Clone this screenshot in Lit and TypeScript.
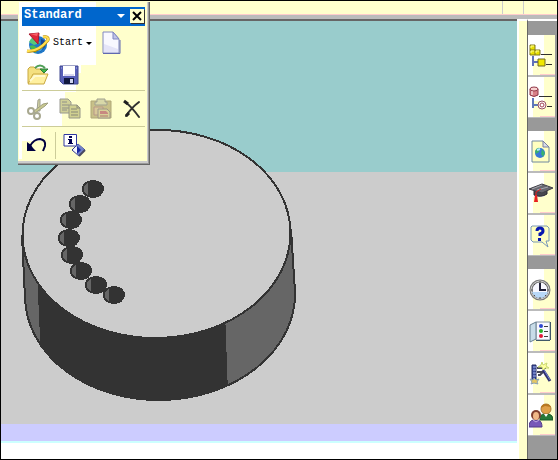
import { LitElement, html, css, svg, TemplateResult } from "lit";
import { customElement, property } from "lit/decorators.js";

const icon = (w: number, h: number, body: TemplateResult) =>
  html`<svg width=${w} height=${h} viewBox="0 0 ${w} ${h}" aria-hidden="true">${body}</svg>`;

const startIcon = icon(24, 24, svg`
  <circle cx="12" cy="14" r="9" fill="#2078c8"/>
  <path d="M3 11Q5 6 11 5L14 12 8 14Z" fill="#58c878"/>
  <path d="M4 15Q8 13 11 17L10 22Q6 20 4 16Z" fill="#48b850"/>
  <path d="M15 8Q21 9 19 16L14 21Q12 17 15 14Z" fill="#184898"/>
  <path d="M12 16Q16 14 18 15L15 20Q12 21 11 19Z" fill="#38a0e0"/>
  <path d="M1 20Q12 22 22 9Q23 5 17 6" fill="none" stroke="#b88800" stroke-width="3"/>
  <path d="M1 20Q12 21 22 9Q23 5 17 6" fill="none" stroke="#ffe050" stroke-width="2"/>
  <path d="M3 3L13 2 12 13Z" fill="#e02838" stroke="#a81830"/>
  <path d="M4 3L12 2 11 5Z" fill="#f86068"/>`);
const pageIcon = icon(20, 24, svg`
  <path d="M2 1H12L18 8V22H2Z" fill="#f8f8ff" stroke="#8088c0"/>
  <path d="M3 13L17 18V21H3Z" fill="#e4e4f8"/>
  <path d="M12 1V8H18Z" fill="#c0c4e8" stroke="#8088c0"/>
  <path d="M2 22.5H19V9" fill="none" stroke="#6068b0"/>`);
const openIcon = icon(24, 24, svg`
  <path d="M2 20V6L4 4H8L10 6H16L18 8V19Z" fill="#f4e080" stroke="#c8a840"/>
  <path d="M2 21L7 11H22L18 21Z" fill="#fff0a0" stroke="#c8a840"/>
  <path d="M4 18L9 13H19" stroke="#fffad0" stroke-width="2" fill="none"/>
  <path d="M9 5Q14 0 19 5" fill="none" stroke="#50a058" stroke-width="2"/>
  <path d="M14 6H22L18 10Z" fill="#40b848" stroke="#307838"/>`);
const saveIcon = icon(20, 20, svg`
  <path d="M1 1H19V19H4L1 16Z" fill="#5860b8" stroke="#404890"/>
  <path d="M4 1H16V11H4Z" fill="#fff"/><path d="M5 9H15V11H5Z" fill="#d8d8f0"/>
  <path d="M5 13H15V19H5Z" fill="#101840"/><path d="M11 14H14V18H11Z" fill="#d0d4f0"/>
  <path d="M2 3H3M17 3H18" stroke="#a8b0e8"/>`);
const cutIcon = icon(24, 24, svg`
  <path d="M12 3L14 2V14L11 14Z" fill="#d0d0a0" stroke="#a0a090"/>
  <path d="M8 14L17 7 22 6 19 9 9 16Z" fill="#c8c890" stroke="#a0a080"/>
  <circle cx="5" cy="14" r="3" fill="#fff" stroke="#a8a890" stroke-width="2"/>
  <circle cx="11" cy="19" r="3" fill="#fff" stroke="#a8a890" stroke-width="2"/>`);
const copyIcon = icon(22, 22, svg`
  <path d="M1 1H9L12 4V15H1Z" fill="#d0d098" stroke="#989890"/>
  <path d="M3 4H8M3 7H10M3 10H10M3 12H8" stroke="#909088"/>
  <path d="M10 7H18L21 10V20H10Z" fill="#d0d090" stroke="#989888"/>
  <path d="M18 7V10H21M12 11H18M12 14H19M12 17H19" fill="none" stroke="#888878"/>`);
const pasteIcon = icon(24, 22, svg`
  <path d="M1 3H21V20H1Z" fill="#c8c088" stroke="#b0a878"/>
  <path d="M7 4V1H15V4H17V7H5V4Z" fill="#d8d8a8" stroke="#a0a090"/>
  <path d="M4 9H13V17H4Z" fill="#d8c898" stroke="#b89888"/>
  <path d="M8 11H17L20 14V20H8Z" fill="#d8d098" stroke="#a09888"/>
  <path d="M10 13H16L18 15V16H10Z" fill="#c88880"/><path d="M10 18H18" stroke="#b07870"/>`);
const deleteIcon = icon(20, 20, svg`
  <path d="M2 3Q8 7 16 18M16 3Q8 9 3 17" fill="none" stroke="#303030" stroke-width="2" stroke-linecap="round"/>
  <path d="M1 2L5 5M3 17L6 14" stroke="#202020" stroke-width="3"/>`);
const undoIcon = icon(22, 18, svg`
  <path d="M4 10Q8 3 14 3Q20 4 19 10L17 15" fill="none" stroke="#000040" stroke-width="2"/>
  <path d="M1 6V15H10L7 12 5 9Z" fill="#000040"/>`);
const infoIcon = icon(24, 24, svg`
  <path d="M1 1.500H13.500V13H1Z" fill="#fff" stroke="#3038a0"/>
  <path d="M6 3H9V5H6ZM5 6H9V10H10V11H5V10H6V7H5Z" fill="#000050"/>
  <path d="M9 17L15 11 22 17 16 23Z" fill="#f4f4ff" stroke="#303890"/>
  <path d="M15 11L22 17 16 23 14 21 17 17 13 13Z" fill="#7080c8"/>
  <path d="M14 13L18 17 14 21Z" fill="#1828a0"/><path d="M16 23L22 17" stroke="#484860" stroke-width="2"/>`);

const partsIcon = icon(24, 24, svg`
  <path d="M4 12V22M4 18H9" stroke="#6070b8" stroke-width="2" fill="none"/>
  <path d="M1 1H6V6H11V11H1ZM1 6H6V11" fill="#e8e000" stroke="#807820"/>
  <path d="M2 4V2H5M2 9V7H5M7 9V7H10" stroke="#ffff90" fill="none"/>
  <path d="M9 15H16V22H9Z" fill="#f0e800" stroke="#706820"/>
  <path d="M12 10.500H23M17 20.500H23" stroke="#303030" stroke-width="1"/>`);
const cylinderIcon = icon(24, 24, svg`
  <path d="M4 12V22M4 19H9" stroke="#6078b8" stroke-width="2" fill="none"/>
  <path d="M1 3V9Q5 12 9 9V3Z" fill="#d88088" stroke="#903848"/>
  <ellipse cx="5" cy="3" rx="4" ry="2" fill="#f8d0d0" stroke="#903848"/>
  <path d="M3 5V9" stroke="#fff" stroke-width="1"/>
  <circle cx="13" cy="19" r="4" fill="#fff" stroke="#985060"/>
  <circle cx="13" cy="19" r="2" fill="none" stroke="#a04050"/>
  <path d="M10 10.500H23M18 20.500H23" stroke="#303030"/>`);
const webIcon = icon(24, 24, svg`
  <path d="M3 1H14L20 7V22H3Z" fill="#ffffc0" stroke="#7088a0"/>
  <path d="M14 1V7H20Z" fill="#d8dce8" stroke="#7880a0"/>
  <circle cx="11" cy="13" r="5" fill="#3878d8"/>
  <path d="M6 11Q8 7 11 8L10 12 7 14ZM13 9L16 13 14 17 12 14Z" fill="#38b070"/>
  <path d="M8 10L11 9" stroke="#b8e8ff" stroke-width="2"/>`);
const capIcon = icon(24, 24, svg`
  <path d="M5 8V13Q12 16 18 12V8Z" fill="#484850" stroke="#282830"/>
  <path d="M0 7L13 2 24 6 13 11Z" fill="#686870" stroke="#404048"/>
  <path d="M3 7L13 3M8 8L19 5" stroke="#a8a8b0"/>
  <path d="M12 7L7 10V15" fill="none" stroke="#e02020" stroke-width="1"/>
  <path d="M6 13H8L9 20H5Z" fill="#e82020"/>`);
const helpIcon = icon(24, 24, svg`
  <path d="M3 2H18L20 4V17H17L19 23 13 18H4L2 16V3Z" fill="#ffffc0" stroke="#7898b8"/>
  <path d="M8 7Q8 4 11 4Q14 4 14 7Q14 9 11 10V12" fill="none" stroke="#0818b0" stroke-width="3"/>
  <path d="M9 14H12V17H9Z" fill="#0818b0"/>`);
const clockIcon = icon(24, 24, svg`
  <circle cx="11" cy="12" r="9" fill="#f8f8ff" stroke="#787878" stroke-width="3"/>
  <path d="M3 14H19Q17 20 11 20Q5 20 3 14Z" fill="#b8d8f8"/>
  <circle cx="11" cy="12" r="9" fill="none" stroke="#d0d0d0"/>
  <path d="M11 5V12H17" fill="none" stroke="#202038" stroke-width="2"/>
  <path d="M11 3V5M11 19V21M2 12H4M18 12H20M5 6L6 7M17 6L16 7M5 18L6 17M17 18L16 17" stroke="#505050"/>`);
const listIcon = icon(24, 24, svg`
  <path d="M7 2H21V20H7Z" fill="#f8f8ff" stroke="#8090a0"/>
  <path d="M21.500 2V20M7 20.500H21" stroke="#405868" stroke-width="1"/>
  <path d="M1 5L7 2V19L1 22Z" fill="#c8dce8" stroke="#688090"/>
  <circle cx="12" cy="6" r="2" fill="#3048d0"/><circle cx="12" cy="11" r="2" fill="#28b028"/>
  <circle cx="12" cy="16" r="2" fill="#e01838"/>
  <path d="M15 6.500H19M15 11.500H19M15 16.500H19" stroke="#404040"/>`);
const wandIcon = icon(24, 24, svg`
  <path d="M3 3H7V18H3Z" fill="#4050a0" stroke="#202860"/>
  <path d="M4 5H7M4 8H7M4 11H7M4 14H7" stroke="#a0b0e8"/>
  <path d="M8 6H17M8 10H14L11 13H9" stroke="#484858" stroke-width="2" fill="none"/>
  <path d="M14 8L21 19" stroke="#303070" stroke-width="3"/><path d="M15 8L21 18" stroke="#7080d0"/>
  <path d="M13 0L14 3 18 1 17 4 20 6 16 6 14 8 13 5 9 5 12 3Z" fill="#ffffa0" stroke="#c8d870"/>
  <path d="M1 17L4 18 5 16 7 18 10 17 8 20 9 22 5 21 2 22 3 20Z" fill="#e8c860" stroke="#88a0b8"/>`);
const peopleIcon = icon(24, 26, svg`
  <path d="M11 17Q11 11 15 11H20Q24 12 24 17Z" fill="#287838" stroke="#185828"/>
  <circle cx="17" cy="6" r="5" fill="#e0a048" stroke="#a87838"/>
  <path d="M12 5Q12 1 17 1Q21 1 22 4L16 3Z" fill="#b87820"/>
  <path d="M15 11L17 14 19 11Z" fill="#fff"/>
  <path d="M0 24Q0 17 5 17H9Q13 18 13 24Z" fill="#7858b8" stroke="#503888"/>
  <circle cx="7" cy="12" r="5" fill="#804030"/>
  <ellipse cx="7" cy="13" rx="3" ry="4" fill="#f0b888"/>
  <path d="M4 17L7 19 10 17" fill="none" stroke="#c0a8e0"/>`);

interface Tool {
  label: string;
  art: TemplateResult;
}

@customElement("model-view")
class ModelView extends LitElement {
  static styles = css`
    :host { display: flex; flex-direction: column; position: relative; flex: 1; min-width: 0; overflow: hidden; background: #fff; }
    .sky { height: 151px; background: #99cccc; }
    .ground { height: 252px; background: #ccc; }
    .base { height: 17px; background: #ccccff; }
    .edge { height: 2px; background: #ccffff; }
    .model { position: absolute; left: 0; top: 0; }
  `;
  render() {
    const holes = [[93, 168], [80, 183], [71, 199], [69, 217], [72, 234], [81, 250], [96, 264], [114, 274]];
    return html`
      <div class="sky"></div><div class="ground"></div><div class="base"></div><div class="edge"></div>
      <svg class="model" width="320" height="400" viewBox="0 0 320 400" shape-rendering="crispEdges" role="img" aria-label="Drilled disc">
        <defs>
          <clipPath id="side"><path d="M21 214L24 277A135 105 -1 0 0 294 271L290 208Z"/></clipPath>
        </defs>
        <g clip-path="url(#side)">
          <rect width="320" height="400" fill="#666"/>
          <path d="M36 250L40 340V400H228L224 290V250Z" fill="#333"/>
        </g>
        <path d="M21 214L24 277A135 105 -1 0 0 294 271L290 208" fill="none" stroke="#333" stroke-width="2"/>
        <ellipse cx="155.500" cy="213" rx="134" ry="104" transform="rotate(-1 155 213)" fill="#ccc" stroke="#333" stroke-width="2"/>
        ${holes.map(([x, y]) => svg`
          <ellipse cx=${x - 1} cy=${y} rx="11" ry="9" fill="#333"/>
          <path d="M${x - 6} ${y - 6}Q${x - 15} ${y} ${x - 6} ${y + 6}Z" fill="#666"/>`)}
      </svg>`;
  }
}

@customElement("side-bar")
class SideBar extends LitElement {
  static styles = css`
    :host { display: flex; flex-direction: column; gap: 14px; width: 30px; box-sizing: border-box; padding-top: 14px; border-left: 1px solid #666; background: #999; }
    .group { display: flex; flex-direction: column; margin-right: 2px; }
    button { display: flex; align-items: center; height: 42px; width: 27px; padding: 2px 0 0 1px; border: 0; border-bottom: 2px solid #bbb;
      background: linear-gradient(#fcc, #fcc) 100% 100% / 15px 1px no-repeat, linear-gradient(#fff, #fff) 0 0 / 16px 24px no-repeat, linear-gradient(#fff, #fff) 0 0 / 5px 100% no-repeat, #ffffcc; }
    .group button:last-child { height: 41px; border-bottom-width: 1px; margin-bottom: -1px; }
    svg { display: block; }
  `;
  @property({ attribute: false }) groups: Tool[][] = [];
  render() {
    return this.groups.map((g) => html`<div class="group">
      ${g.map((t) => html`<button aria-label=${t.label}>${t.art}</button>`)}</div>`);
  }
}

@customElement("tool-palette")
class ToolPalette extends LitElement {
  static styles = css`
    :host { display: block; box-sizing: border-box; width: 132px; padding: 5px 4px 1px; border: 0 solid #666; border-width: 0 1px 1px 0;
      box-shadow: inset -1px -1px #999, inset -2px -3px #ccc; position: relative; background: #ffffcc; }
    .glow { position: absolute; left: 1px; top: 0; width: 77px; height: 157px; background: #fff;
      clip-path: polygon(0 0, 100% 0, 100% 63px, 62px 63px, 62px 71px, 57px 71px, 57px 90px, 46px 90px, 46px 108px, 43px 108px, 43px 124px, 22px 124px, 22px 139px, 3px 139px, 3px 100%, 0 100%); }
    .title { display: flex; align-items: center; position: relative; height: 19px; box-sizing: border-box; padding: 0 1px 2px 2px; background: #0066cc; color: #fff; }
    h1 { flex: 1; margin: 0; font: bold 12px/17px "Liberation Mono", monospace; }
    button { display: flex; align-items: center; justify-content: center; padding: 0; border: 0; background: none; color: #000; }
    .menu { width: 16px; height: 16px; margin-right: 1px; }
    .close { width: 14px; height: 14px; background: #ffffcc; box-shadow: 1px 1px #333; }
    .row { display: flex; align-items: center; position: relative; height: 30px; gap: 9px; padding-left: 4px; }
    .first { height: 34px; }
    .edit { height: 35px; border-top: 1px solid #cccc99; border-bottom: 1px solid #cccc99; }
    .last { height: 36px; gap: 7px; }
    .start { gap: 3px; font: 10px/14px "Liberation Mono", monospace; }
    .divider { width: 1px; height: 27px; background: #cccc99; }
    svg { display: block; }
  `;
  render() {
    const tool = (label: string, art: TemplateResult) => html`<button aria-label=${label}>${art}</button>`;
    return html`
      <div class="glow"></div>
      <div class="title">
        <h1>Standard</h1>
        <button class="menu" aria-label="Toolbar options">${icon(8, 4, svg`<path d="M0 0H8L4 4Z" fill="#fff"/>`)}</button>
        <button class="close" aria-label="Close">${icon(10, 10, svg`<path d="M1 1L9 9M9 1L1 9" stroke="#000" stroke-width="2"/>`)}</button>
      </div>
      <div class="row first">
        <button class="start">${startIcon}<span>Start</span>${icon(6, 3, svg`<path d="M0 0H6L3 3Z"/>`)}</button>
        ${tool("New", pageIcon)}
      </div>
      <div class="row">${tool("Open", openIcon)}${tool("Save", saveIcon)}</div>
      <div class="row edit">${tool("Cut", cutIcon)}${tool("Copy", copyIcon)}${tool("Paste", pasteIcon)}${tool("Delete", deleteIcon)}</div>
      <div class="row last">${tool("Undo", undoIcon)}<span class="divider"></span>${tool("Information", infoIcon)}</div>`;
  }
}

@customElement("app-root")
class AppRoot extends LitElement {
  static styles = css`
    :host { display: flex; flex-direction: column; position: relative; box-sizing: border-box; min-height: 100vh; border: 1px solid #000; background: #fff; }
    .strip { display: flex; justify-content: flex-end; height: 18px; box-sizing: border-box; border-bottom: 4px solid #bbb; background: linear-gradient(#fcc, #fcc) 0 100% / 100% 1px no-repeat padding-box, #ffffcc; }
    .slot { width: 20px; height: 13px; border-left: 1px solid #ccc; }
    .slot.wide { width: 33px; }
    .body { display: flex; flex: 1; }
    .main { display: flex; flex: 1; min-width: 0; border-top: 2px solid #666; }
    .gutter { width: 8px; border-left: 2px solid #fff; border-top: 2px solid #fff; background: #ffffcc; }
    side-bar { border-top: 2px solid #fff; }
    tool-palette { position: absolute; left: 17px; top: 1px; }
  `;
  private groups: Tool[][] = [
    [{ label: "Assembly parts", art: partsIcon }, { label: "Features", art: cylinderIcon }],
    [{ label: "Web page", art: webIcon }, { label: "Training", art: capIcon }, { label: "Help", art: helpIcon }],
    [{ label: "History", art: clockIcon }, { label: "Palettes", art: listIcon }, { label: "Wizards", art: wandIcon }, { label: "Roles", art: peopleIcon }],
  ];
  render() {
    return html`
      <div class="strip"><span class="slot"></span><span class="slot wide"></span></div>
      <div class="body">
        <main class="main"><model-view></model-view></main>
        <div class="gutter"></div>
        <side-bar .groups=${this.groups}></side-bar>
      </div>
      <tool-palette></tool-palette>`;
  }
}
